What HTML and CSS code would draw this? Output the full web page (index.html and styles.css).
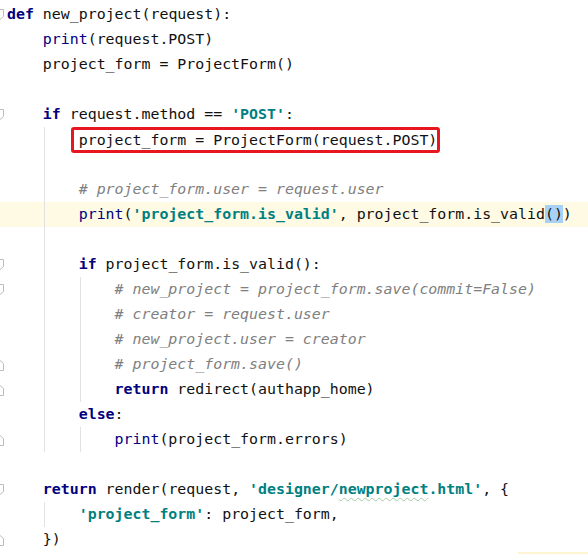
FILE: index.html
```html
<!DOCTYPE html>
<html lang="en">
<head>
    <meta charset="UTF-8">
    <meta name="viewport" content="width=device-width, initial-scale=1.0">
    <title>views.py</title>
    <link rel="stylesheet" href="styles.css">
</head>
<body>
    <div class="editor">
        <div class="ln"><span class="gut"><svg class="fold" width="10" height="12" viewBox="0 0 10 12"><path d="M0.5 0.5H8.5V7.5L4.5 11L0.5 7.5Z"/></svg></span><span class="code"><span class="kw">def</span> new_project(request):</span></div>
        <div class="ln"><span class="gut"></span><span class="ind"></span><span class="code"><span class="bi">print</span>(request.POST)</span></div>
        <div class="ln"><span class="gut"></span><span class="ind"></span><span class="code">project_form = ProjectForm()</span></div>
        <div class="ln"><span class="gut"></span></div>
        <div class="ln"><span class="gut"><svg class="fold" width="10" height="12" viewBox="0 0 10 12"><path d="M0.5 0.5H8.5V7.5L4.5 11L0.5 7.5Z"/></svg></span><span class="ind"></span><span class="code"><span class="kw">if</span> request.method == <span class="str">'POST'</span>:</span></div>
        <div class="ln"><span class="gut"></span><span class="ind"></span><span class="ind g"></span><span class="mark">project_form = ProjectForm(request.POST)</span></div>
        <div class="ln"><span class="gut"></span><span class="ind"></span><span class="ind g"></span></div>
        <div class="ln"><span class="gut"></span><span class="ind"></span><span class="ind g"></span><span class="code cm"># project_form.user = request.user</span></div>
        <div class="ln caret"><span class="gut"></span><span class="ind"></span><span class="ind g"></span><span class="code"><span class="bi">print</span>(<span class="str">'project_form.is_valid'</span>, project_form.is_valid<span class="brace">()</span>)</span></div>
        <div class="ln"><span class="gut"></span><span class="ind"></span><span class="ind g"></span></div>
        <div class="ln"><span class="gut"><svg class="fold" width="10" height="12" viewBox="0 0 10 12"><path d="M0.5 0.5H8.5V7.5L4.5 11L0.5 7.5Z"/></svg></span><span class="ind"></span><span class="ind g"></span><span class="code"><span class="kw">if</span> project_form.is_valid():</span></div>
        <div class="ln"><span class="gut"><svg class="fold" width="10" height="12" viewBox="0 0 10 12"><path d="M0.5 0.5H8.5V7.5L4.5 11L0.5 7.5Z"/></svg></span><span class="ind"></span><span class="ind g"></span><span class="ind g"></span><span class="code cm"># new_project = project_form.save(commit=False)</span></div>
        <div class="ln"><span class="gut"></span><span class="ind"></span><span class="ind g"></span><span class="ind g"></span><span class="code cm"># creator = request.user</span></div>
        <div class="ln"><span class="gut"></span><span class="ind"></span><span class="ind g"></span><span class="ind g"></span><span class="code cm"># new_project.user = creator</span></div>
        <div class="ln"><span class="gut"><svg class="fold" width="10" height="12" viewBox="0 0 10 12"><path d="M0.5 11.5H8.5V4.5L4.5 1L0.5 4.5Z"/></svg></span><span class="ind"></span><span class="ind g"></span><span class="ind g"></span><span class="code cm"># project_form.save()</span></div>
        <div class="ln"><span class="gut"><svg class="fold" width="10" height="12" viewBox="0 0 10 12"><path d="M0.5 11.5H8.5V4.5L4.5 1L0.5 4.5Z"/></svg></span><span class="ind"></span><span class="ind g"></span><span class="ind g"></span><span class="code"><span class="kw">return</span> redirect(authapp_home)</span></div>
        <div class="ln"><span class="gut"></span><span class="ind"></span><span class="ind g"></span><span class="code"><span class="kw">else</span>:</span></div>
        <div class="ln"><span class="gut"><svg class="fold" width="10" height="12" viewBox="0 0 10 12"><path d="M0.5 11.5H8.5V4.5L4.5 1L0.5 4.5Z"/></svg></span><span class="ind"></span><span class="ind g"></span><span class="ind g"></span><span class="code"><span class="bi">print</span>(project_form.errors)</span></div>
        <div class="ln"><span class="gut"></span></div>
        <div class="ln"><span class="gut"><svg class="fold" width="10" height="12" viewBox="0 0 10 12"><path d="M0.5 0.5H8.5V7.5L4.5 11L0.5 7.5Z"/></svg></span><span class="ind"></span><span class="code"><span class="kw">return</span> render(request, <span class="str">'designer/<span class="typo">newproject</span>.html'</span>, {</span></div>
        <div class="ln"><span class="gut"></span><span class="ind"></span><span class="ind g"></span><span class="code"><span class="str">'project_form'</span>: project_form,</span></div>
        <div class="ln"><span class="gut"><svg class="fold" width="10" height="12" viewBox="0 0 10 12"><path d="M0.5 11.5H8.5V4.5L4.5 1L0.5 4.5Z"/></svg></span><span class="ind"></span><span class="code">})</span></div>
        <div class="tail"><span class="tip"></span></div>
    </div>
</body>
</html>
```

FILE: styles.css
```css
html, body {
    margin: 0;
    padding: 0;
    background-color: #fff;
    overflow: hidden;
}

.editor {
    padding-top: 2px;
    font-family: "DejaVu Sans Mono", monospace;
    font-size: 14.9px;
    color: #111;
}

.ln {
    display: flex;
    height: 25px;
    line-height: 25px;
    white-space: pre;
}

.gut {
    flex: none;
    width: 7px;
    display: flex;
    align-items: center;
}

.fold {
    flex: none;
    margin-left: -5px;
}

.fold path {
    fill: #fff;
    stroke: #bdbdbd;
    stroke-width: 1;
}

.ind {
    flex: none;
    width: 4ch;
}

.ind.g {
    background: linear-gradient(#e2e2e2, #e2e2e2) 1px 0 / 1px 100% no-repeat;
}

.kw {
    color: #000080;
    font-weight: bold;
}

.bi {
    color: #000080;
}

.str {
    color: #008080;
    font-weight: bold;
}

.cm {
    color: #808080;
    font-style: italic;
}

.caret {
    background-color: #fefae4;
}

.brace {
    background-color: #a9d1f5;
}

.typo {
    text-decoration: underline wavy #a5c9a5;
    text-decoration-thickness: 1px;
    text-underline-offset: 3px;
}

.mark {
    align-self: center;
    box-sizing: border-box;
    height: 26px;
    line-height: 20px;
    margin: 0 -3px 0 -8px;
    padding: 0 0 0 5px;
    border: 3px solid #e8161e;
    border-radius: 3px;
}

.tail {
    display: flex;
    padding-left: 518px;
}

.tip {
    width: 70px;
    height: 12px;
    background-color: #fcf4d2;
}
```
